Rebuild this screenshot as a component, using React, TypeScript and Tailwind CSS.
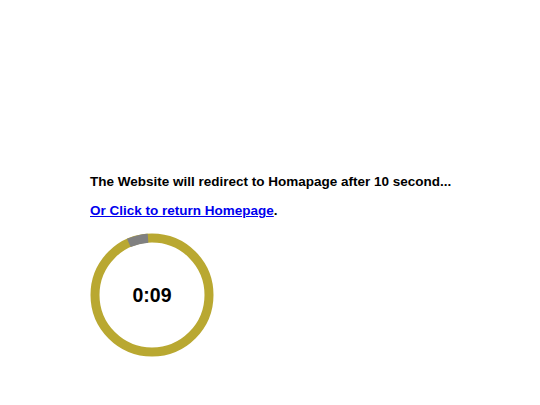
import React from "react"

function Ring() {
    const cx = 62
    const cy = 62
    const r = 57
    const pt = (deg: number) => {
        const a = (deg * Math.PI) / 180
        return `${cx + r * Math.cos(a)} ${cy + r * Math.sin(a)}`
    }
    // gray slice near the top, a bit left of 12 o'clock
    const arc = `M ${pt(-114)} A ${r} ${r} 0 0 1 ${pt(-94)}`
    return (
        <svg width="124" height="124" viewBox="0 0 124 124" className="block">
            <circle cx={cx} cy={cy} r={r} fill="none" stroke="#b9a831" strokeWidth="9" />
            <path d={arc} fill="none" stroke="#808080" strokeWidth="9" />
        </svg>
    )
}

export default function App() {
    return (
        <div className="min-h-[405px] bg-white pl-[90px] pt-[174px]" style={{ fontFamily: '"Liberation Sans", Arial, sans-serif' }}>
            <p className="text-[13.5px] font-bold leading-[16px] text-black">
                The Website will redirect to Homapage after 10 second...
            </p>
            <p className="mt-[13px] text-[13.5px] font-bold leading-[16px] text-black">
                <a href="#" className="text-[#0000ee] underline">Or Click to return Homepage</a>.
            </p>
            <div className="relative mt-[14px] w-[124px] h-[124px]">
                <Ring />
                <div className="absolute inset-0 flex items-center justify-center pt-px text-[19.5px] font-bold text-black">
                    0:09
                </div>
            </div>
        </div>
    )
}
